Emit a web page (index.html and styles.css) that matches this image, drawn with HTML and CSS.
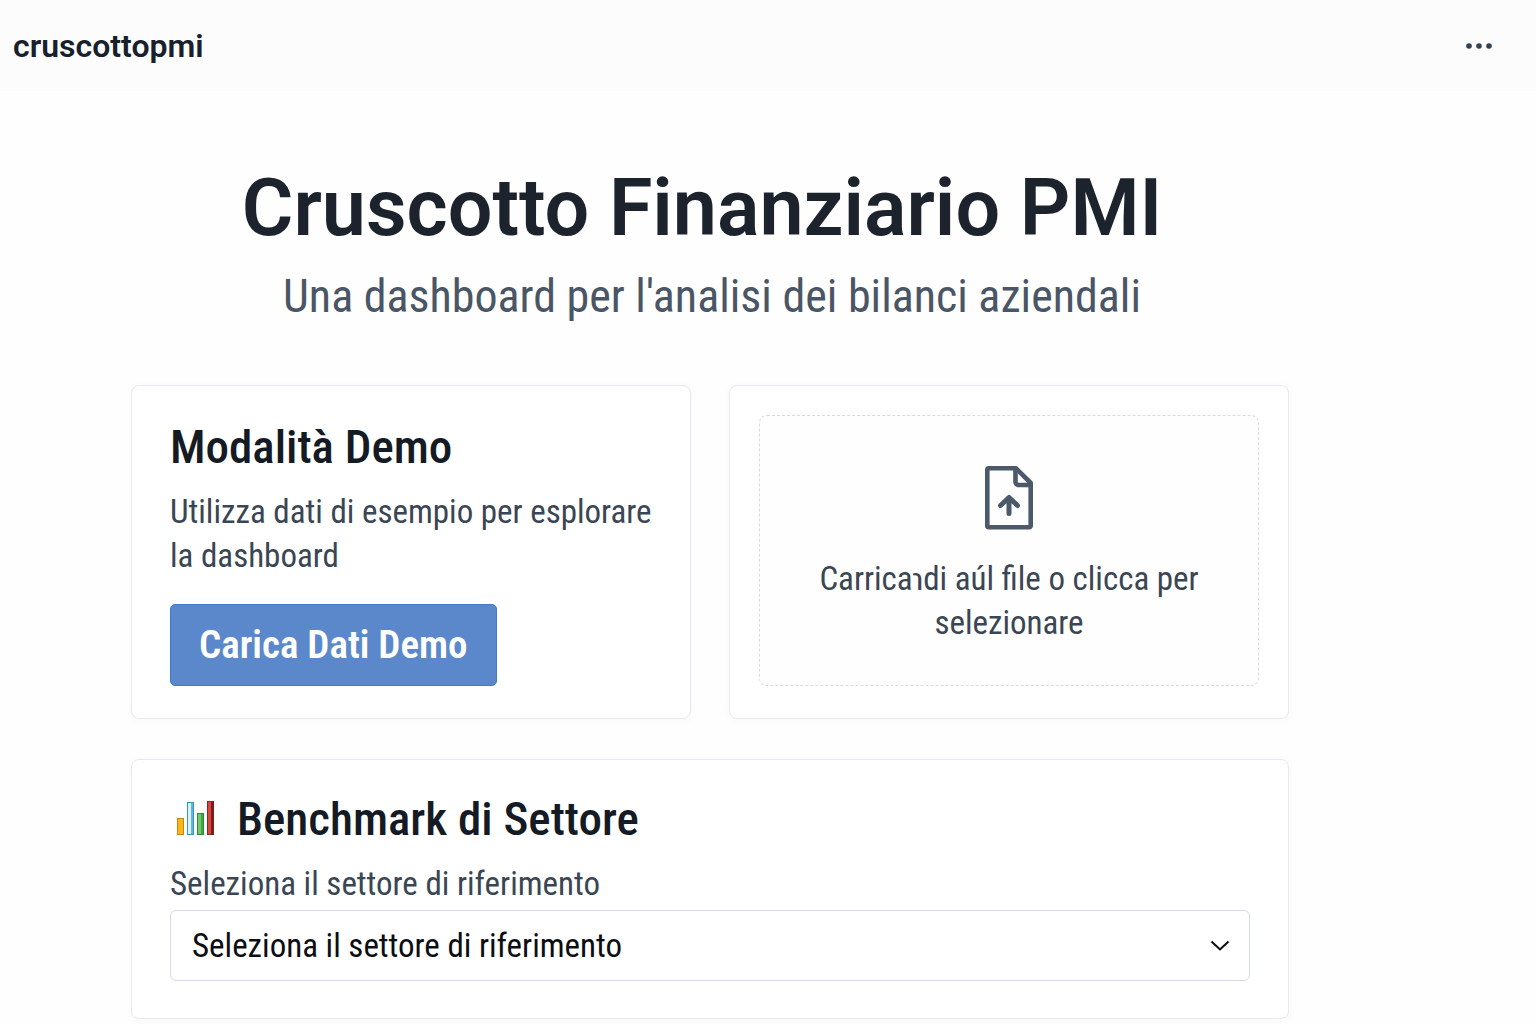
FILE: index.html
```html
<!DOCTYPE html>
<html lang="it">
<head>
<meta charset="utf-8">
<meta name="viewport" content="width=device-width, initial-scale=1">
<title>Cruscotto Finanziario PMI</title>
<link rel="stylesheet" href="styles.css">
</head>
<body>
<header class="topbar">
  <a class="brand" href="#">cruscottopmi</a>
  <button class="menu" type="button" aria-label="Menu">
    <svg width="28" height="8" viewBox="0 0 28 8" fill="#344150" aria-hidden="true"><circle cx="4" cy="4" r="2.8"/><circle cx="14" cy="4" r="2.8"/><circle cx="24" cy="4" r="2.8"/></svg>
  </button>
</header>
<main class="page">
  <div class="hero">
    <h1 class="title">Cruscotto Finanziario PMI</h1>
    <p class="subtitle">Una dashboard per l'analisi dei bilanci aziendali</p>
  </div>
  <div class="cards">
    <section class="card demo">
      <h2 class="heading">Modalità Demo</h2>
      <p class="text">Utilizza dati di esempio per esplorare la dashboard</p>
      <button class="primary" type="button">Carica Dati Demo</button>
    </section>
    <section class="card upload">
      <label class="dropzone" for="file">
        <svg class="file-icon" width="50" height="66" viewBox="0 0 50 66" fill="none" stroke="#4b5968" stroke-width="4.6" stroke-linejoin="round" stroke-linecap="round" aria-hidden="true">
          <path d="M4.300 3.300H32L46.700 18V60.700a1.500 1.500 0 0 1-1.500 1.500H4.800a1.500 1.500 0 0 1-1.500-1.500V4.800a1.500 1.500 0 0 1 1.500-1.500Z"/>
          <path d="M31.500 4V17a3 3 0 0 0 3 3H46"/>
          <path d="M25 48.500V33M16.500 40.500 25 32.500 33.500 40.500" stroke-width="5"/>
        </svg>
        <span class="text">Carricaɿdi aúl file o clicca per selezionare</span>
      </label>
      <input class="file-input" type="file" id="file">
    </section>
    <section class="card benchmark">
      <h2 class="heading with-icon">
        <svg width="50" height="38" viewBox="0 0 50 38" aria-hidden="true">
          <rect x="0.500" y="18.500" width="6" height="16" fill="#fbb713" stroke="#c98416"/>
          <rect x="10.500" y="2.500" width="6" height="32" fill="#d9f2fb" stroke="#3a93bd"/>
          <path d="M15 3v31" stroke="#58b8df" stroke-width="2"/>
          <rect x="20.500" y="13.500" width="6" height="21" fill="#6ccb68" stroke="#33873a"/>
          <path d="M25 14v20" stroke="#45a648" stroke-width="2"/>
          <rect x="30.500" y="1.500" width="6" height="33" fill="#d9463e" stroke="#8d2727"/>
          <path d="M35.500 2v33" stroke="#7c1d1f" stroke-width="3"/>
        </svg>
        Benchmark di Settore
      </h2>
      <label class="text label" for="sector">Seleziona il settore di riferimento</label>
      <div class="select-wrap">
        <select class="select" id="sector"><option>Seleziona il settore di riferimento</option></select>
        <svg class="chevron" width="20" height="12" viewBox="0 0 20 12" fill="none" stroke="#0b0e13" stroke-width="2" aria-hidden="true"><path d="M1.500 1.500 10 9.500 18.500 1.500"/></svg>
      </div>
    </section>
  </div>
</main>
</body>
</html>
```
FILE: styles.css
```css
* { box-sizing: border-box; }

body {
  margin: 0;
  background: #fefefe;
  color: #1d232c;
  font-family: "Roboto Condensed", Lato, Roboto, sans-serif;
}

h1, h2, p { margin: 0; }

.topbar {
  display: flex;
  align-items: center;
  justify-content: space-between;
  height: 91px;
  padding: 0 43px 0 13px;
  background: #fcfcfd;
}

.brand {
  color: #17202b;
  font-family: Roboto, sans-serif;
  font-size: 32px;
  font-weight: 600;
  text-decoration: none;
}

.menu {
  display: flex;
  padding: 8px 0;
  border: 0;
  background: none;
}

.page { padding: 69px 247px 5px 131px; }

.hero {
  display: grid;
  gap: 12px;
  margin-bottom: 61px;
  text-align: center;
}

.title {
  padding-right: 16px;
  font-family: Roboto, sans-serif;
  font-size: 79px;
  font-weight: 600;
  line-height: 96px;
}

.subtitle {
  padding-left: 4px;
  color: #4a5665;
  font-size: 46px;
  line-height: 56px;
}

.cards {
  display: grid;
  grid-template-columns: 1fr 1fr;
  gap: 40px 38px;
}

.card {
  border: 1px solid #e6e9f1;
  border-radius: 8px;
  background: #fff;
  box-shadow: 0 2px 10px rgba(30, 50, 90, 0.03);
}

.demo { padding: 35px 30px 32px 38px; }
.upload { display: grid; padding: 29px 29px 32px; }
.benchmark { grid-column: 1 / -1; padding: 33px 38px 37px; }

.heading {
  margin-bottom: 17px;
  color: #151b24;
  font-size: 47px;
  font-weight: 500;
  line-height: 52px;
}

.with-icon {
  display: flex;
  align-items: center;
  gap: 10px;
  padding-left: 7px;
}

.text {
  color: #3a4653;
  font-size: 33px;
  line-height: 44px;
}

.primary {
  height: 82px;
  margin-top: 26px;
  padding: 0 28px;
  border: 1px solid #4479c8;
  border-radius: 5px;
  background: #5b88cb;
  color: #fff;
  font: 600 39px "Roboto Condensed", Roboto, sans-serif;
}

.dropzone {
  display: flex;
  flex-direction: column;
  align-items: center;
  gap: 26px;
  padding: 49px 40px 0;
  border: 1px dashed #d9dbdf;
  border-radius: 8px;
  background: #fefefe;
  text-align: center;
}

.file-input { display: none; }

.label { display: block; margin-bottom: 4px; }

.select-wrap { display: grid; align-items: center; }

.select,
.chevron { grid-area: 1 / 1; }

.select {
  width: 100%;
  height: 71px;
  padding: 0 60px 0 21px;
  border: 1px solid #d3dbe9;
  border-radius: 6px;
  appearance: none;
  background: #fff;
  color: #0b0e13;
  font: 33px "Roboto Condensed", Roboto, sans-serif;
}

.chevron {
  justify-self: end;
  margin-right: 20px;
  pointer-events: none;
}
```
